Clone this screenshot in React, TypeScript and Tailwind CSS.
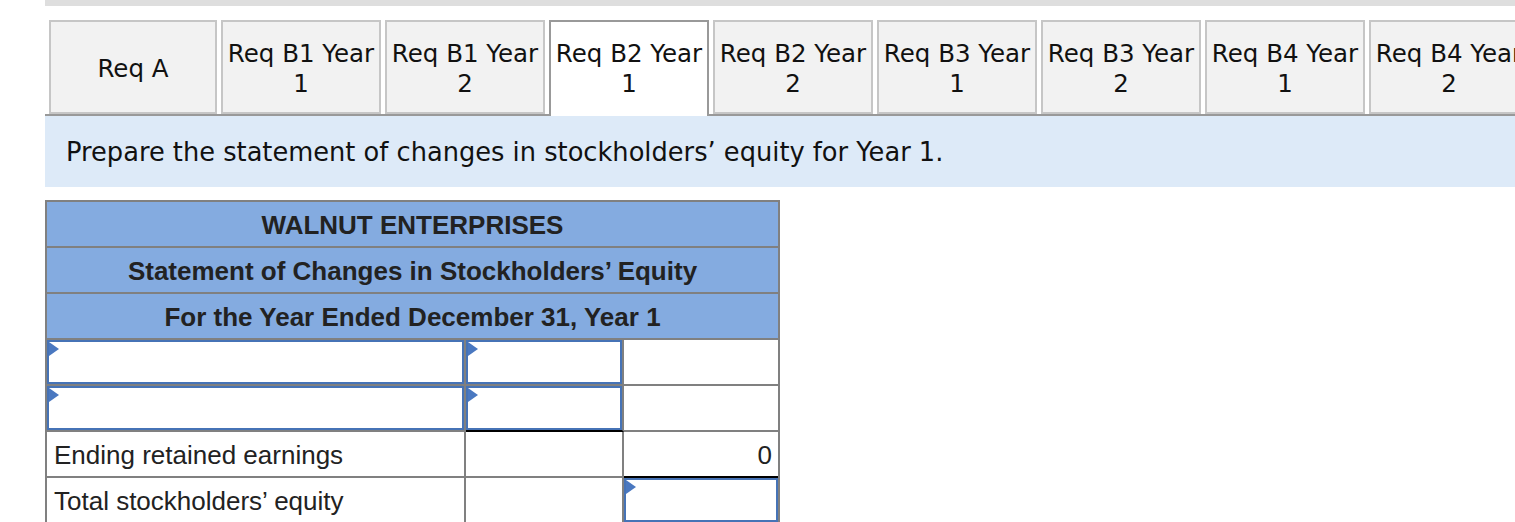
const TABS = [
  { label: 'Req A', sub: '' },
  { label: 'Req B1 Year', sub: '1' },
  { label: 'Req B1 Year', sub: '2' },
  { label: 'Req B2 Year', sub: '1' },
  { label: 'Req B2 Year', sub: '2' },
  { label: 'Req B3 Year', sub: '1' },
  { label: 'Req B3 Year', sub: '2' },
  { label: 'Req B4 Year', sub: '1' },
  { label: 'Req B4 Year', sub: '2' },
];

const ACTIVE = 3;

function Marker() {
  return (
    <svg className="absolute left-0 top-0" width="10" height="14" viewBox="0 0 10 14">
      <path d="M0 0 L10 7 L0 14 Z" fill="#4a78c0" />
    </svg>
  );
}

function InputBox() {
  return (
    <div className="relative h-full w-full border-2 border-[#4673b6] bg-white">
      <Marker />
    </div>
  );
}

type Cell = {
  kind: 'input' | 'text' | 'empty';
  text?: string;
  right?: boolean;
  darkBottom?: boolean;
};

const ROWS: Cell[][] = [
  [{ kind: 'input' }, { kind: 'input' }, { kind: 'empty' }],
  [{ kind: 'input' }, { kind: 'input', darkBottom: true }, { kind: 'empty' }],
  [
    { kind: 'text', text: 'Ending retained earnings' },
    { kind: 'empty' },
    { kind: 'text', text: '0', right: true, darkBottom: true },
  ],
  [
    { kind: 'text', text: 'Total stockholders’ equity' },
    { kind: 'empty' },
    { kind: 'input', darkBottom: true },
  ],
];

const WIDTHS = ['w-[419px] border-r-2', 'w-[158px] border-r-2', 'w-[154px]'];

export default function App() {
  return (
    <div className="w-[1515px] h-[522px] overflow-hidden bg-white pl-[45px]">
      <div className="h-[6px] bg-[#dedede]" />

      <div className="mt-[14px] flex items-start border-b-2 border-[#999999] pl-[4px] w-[1600px]">
        {TABS.map((t, i) => {
          const active = i === ACTIVE;
          return (
            <div
              key={i}
              className={
                'flex flex-none flex-col items-center justify-center mr-[4px] pt-[4px] text-[24.5px] leading-[30px] text-[#111] whitespace-nowrap font-["DejaVu_Sans",Verdana,sans-serif] ' +
                (i === 0 ? 'w-[168px] ' : 'w-[160px] ') +
                (active
                  ? 'relative h-[96px] -mb-[2px] pb-[4px] border-2 border-b-0 border-[#999999] bg-white'
                  : 'h-[94px] border-2 border-[#c6c6c6] bg-[#f2f2f2]')
              }
            >
              <span>{t.label}</span>
              {t.sub && <span>{t.sub}</span>}
            </div>
          );
        })}
      </div>

      <div className='flex h-[71px] items-center bg-[#ddeaf8] pl-[21px] pt-[2px] text-[25.7px] text-[#111] font-["DejaVu_Sans",Verdana,sans-serif]'>
        Prepare the statement of changes in stockholders’ equity for Year 1.
      </div>

      <div className='mt-[13px] w-[735px] border-2 border-b-0 border-[#808080] text-[26px] text-[#222] font-["Liberation_Sans",Arial,sans-serif]'>
        {['WALNUT ENTERPRISES', 'Statement of Changes in Stockholders’ Equity', 'For the Year Ended December 31, Year 1'].map((h) => (
          <div
            key={h}
            className="flex h-[46px] items-center justify-center border-b-2 border-[#808080] bg-[#84abe0] pt-[2px] font-bold"
          >
            {h}
          </div>
        ))}

        {ROWS.map((row, r) => (
          <div key={r} className="flex h-[46px]">
            {row.map((c, j) => (
              <div
                key={j}
                className={
                  'h-full border-b-2 border-[#808080] ' +
                  WIDTHS[j] +
                  (c.darkBottom ? ' border-b-black' : '')
                }
              >
                {c.kind === 'input' && <InputBox />}
                {c.kind === 'text' && (
                  <div
                    className={
                      'flex h-full items-center pt-[2px] ' +
                      (c.right ? 'justify-end pr-[6px]' : 'pl-[7px]')
                    }
                  >
                    {c.text}
                  </div>
                )}
              </div>
            ))}
          </div>
        ))}
      </div>
    </div>
  );
}
